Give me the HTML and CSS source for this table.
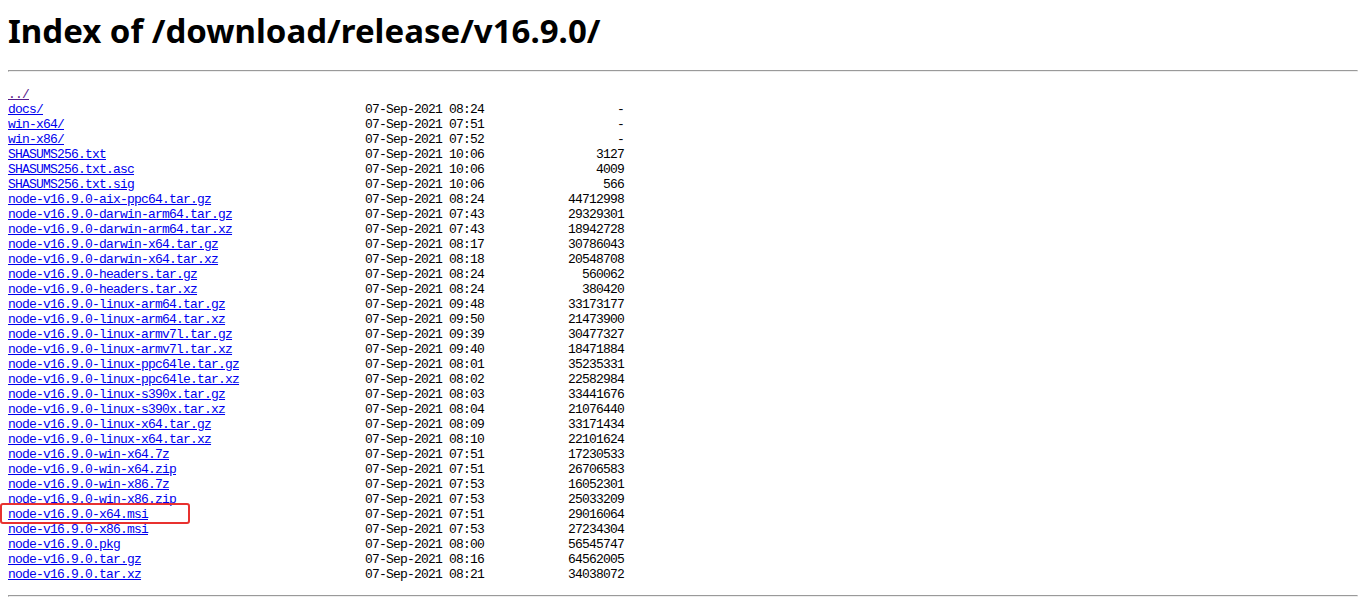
FILE: index.html
```html
<!DOCTYPE html>
<html lang="en">
<head>
    <meta charset="UTF-8">
    <title>Index of /download/release/v16.9.0/</title>
    <link rel="stylesheet" href="styles.css">
</head>
<body>
    <h1>Index of /download/release/v16.9.0/</h1>
    <hr>
    <div class="listing">
        <div class="row"><a class="visited" href="../">../</a></div>
        <div class="row"><a href="docs/">docs/</a><span>07-Sep-2021 08:24</span><span class="size">-</span></div>
        <div class="row"><a href="win-x64/">win-x64/</a><span>07-Sep-2021 07:51</span><span class="size">-</span></div>
        <div class="row"><a href="win-x86/">win-x86/</a><span>07-Sep-2021 07:52</span><span class="size">-</span></div>
        <div class="row"><a href="SHASUMS256.txt">SHASUMS256.txt</a><span>07-Sep-2021 10:06</span><span class="size">3127</span></div>
        <div class="row"><a href="SHASUMS256.txt.asc">SHASUMS256.txt.asc</a><span>07-Sep-2021 10:06</span><span class="size">4009</span></div>
        <div class="row"><a href="SHASUMS256.txt.sig">SHASUMS256.txt.sig</a><span>07-Sep-2021 10:06</span><span class="size">566</span></div>
        <div class="row"><a href="node-v16.9.0-aix-ppc64.tar.gz">node-v16.9.0-aix-ppc64.tar.gz</a><span>07-Sep-2021 08:24</span><span class="size">44712998</span></div>
        <div class="row"><a href="node-v16.9.0-darwin-arm64.tar.gz">node-v16.9.0-darwin-arm64.tar.gz</a><span>07-Sep-2021 07:43</span><span class="size">29329301</span></div>
        <div class="row"><a href="node-v16.9.0-darwin-arm64.tar.xz">node-v16.9.0-darwin-arm64.tar.xz</a><span>07-Sep-2021 07:43</span><span class="size">18942728</span></div>
        <div class="row"><a href="node-v16.9.0-darwin-x64.tar.gz">node-v16.9.0-darwin-x64.tar.gz</a><span>07-Sep-2021 08:17</span><span class="size">30786043</span></div>
        <div class="row"><a href="node-v16.9.0-darwin-x64.tar.xz">node-v16.9.0-darwin-x64.tar.xz</a><span>07-Sep-2021 08:18</span><span class="size">20548708</span></div>
        <div class="row"><a href="node-v16.9.0-headers.tar.gz">node-v16.9.0-headers.tar.gz</a><span>07-Sep-2021 08:24</span><span class="size">560062</span></div>
        <div class="row"><a href="node-v16.9.0-headers.tar.xz">node-v16.9.0-headers.tar.xz</a><span>07-Sep-2021 08:24</span><span class="size">380420</span></div>
        <div class="row"><a href="node-v16.9.0-linux-arm64.tar.gz">node-v16.9.0-linux-arm64.tar.gz</a><span>07-Sep-2021 09:48</span><span class="size">33173177</span></div>
        <div class="row"><a href="node-v16.9.0-linux-arm64.tar.xz">node-v16.9.0-linux-arm64.tar.xz</a><span>07-Sep-2021 09:50</span><span class="size">21473900</span></div>
        <div class="row"><a href="node-v16.9.0-linux-armv7l.tar.gz">node-v16.9.0-linux-armv7l.tar.gz</a><span>07-Sep-2021 09:39</span><span class="size">30477327</span></div>
        <div class="row"><a href="node-v16.9.0-linux-armv7l.tar.xz">node-v16.9.0-linux-armv7l.tar.xz</a><span>07-Sep-2021 09:40</span><span class="size">18471884</span></div>
        <div class="row"><a href="node-v16.9.0-linux-ppc64le.tar.gz">node-v16.9.0-linux-ppc64le.tar.gz</a><span>07-Sep-2021 08:01</span><span class="size">35235331</span></div>
        <div class="row"><a href="node-v16.9.0-linux-ppc64le.tar.xz">node-v16.9.0-linux-ppc64le.tar.xz</a><span>07-Sep-2021 08:02</span><span class="size">22582984</span></div>
        <div class="row"><a href="node-v16.9.0-linux-s390x.tar.gz">node-v16.9.0-linux-s390x.tar.gz</a><span>07-Sep-2021 08:03</span><span class="size">33441676</span></div>
        <div class="row"><a href="node-v16.9.0-linux-s390x.tar.xz">node-v16.9.0-linux-s390x.tar.xz</a><span>07-Sep-2021 08:04</span><span class="size">21076440</span></div>
        <div class="row"><a href="node-v16.9.0-linux-x64.tar.gz">node-v16.9.0-linux-x64.tar.gz</a><span>07-Sep-2021 08:09</span><span class="size">33171434</span></div>
        <div class="row"><a href="node-v16.9.0-linux-x64.tar.xz">node-v16.9.0-linux-x64.tar.xz</a><span>07-Sep-2021 08:10</span><span class="size">22101624</span></div>
        <div class="row"><a href="node-v16.9.0-win-x64.7z">node-v16.9.0-win-x64.7z</a><span>07-Sep-2021 07:51</span><span class="size">17230533</span></div>
        <div class="row"><a href="node-v16.9.0-win-x64.zip">node-v16.9.0-win-x64.zip</a><span>07-Sep-2021 07:51</span><span class="size">26706583</span></div>
        <div class="row"><a href="node-v16.9.0-win-x86.7z">node-v16.9.0-win-x86.7z</a><span>07-Sep-2021 07:53</span><span class="size">16052301</span></div>
        <div class="row"><a href="node-v16.9.0-win-x86.zip">node-v16.9.0-win-x86.zip</a><span>07-Sep-2021 07:53</span><span class="size">25033209</span></div>
        <div class="row"><a href="node-v16.9.0-x64.msi">node-v16.9.0-x64.msi</a><span>07-Sep-2021 07:51</span><span class="size">29016064</span></div>
        <div class="row"><a href="node-v16.9.0-x86.msi">node-v16.9.0-x86.msi</a><span>07-Sep-2021 07:53</span><span class="size">27234304</span></div>
        <div class="row"><a href="node-v16.9.0.pkg">node-v16.9.0.pkg</a><span>07-Sep-2021 08:00</span><span class="size">56545747</span></div>
        <div class="row"><a href="node-v16.9.0.tar.gz">node-v16.9.0.tar.gz</a><span>07-Sep-2021 08:16</span><span class="size">64562005</span></div>
        <div class="row"><a href="node-v16.9.0.tar.xz">node-v16.9.0.tar.xz</a><span>07-Sep-2021 08:21</span><span class="size">34038072</span></div>
    </div>
    <hr>
    <div class="highlight"></div>
</body>
</html>
```

FILE: styles.css
```css
body {
    margin: 8px;
    background: white;
    color: black;
}

h1 {
    margin: 0 0 16px 0;
    font-family: 'Noto Sans', 'Open Sans', sans-serif;
    font-size: 33px;
    font-weight: bold;
    line-height: 46px;
}

hr {
    margin: 8px 0;
}

.listing {
    margin: 15px 0 13px 0;
    font-family: 'Liberation Mono', 'DejaVu Sans Mono', monospace;
    font-size: 13px;
    letter-spacing: -0.8px;
    line-height: 15px;
}

.row {
    display: grid;
    grid-template-columns: 357px 120px 139px;
    height: 15px;
    white-space: nowrap;
}

.row a {
    color: #0000ee;
    text-decoration: underline;
}

.row a.visited {
    color: #551a8b;
}

.size {
    text-align: right;
}

/* annotation box around the x64 installer */
.highlight {
    position: absolute;
    left: 0;
    top: 503px;
    width: 186px;
    height: 17px;
    border: 2px solid #e8312f;
    border-radius: 3px;
}
```
